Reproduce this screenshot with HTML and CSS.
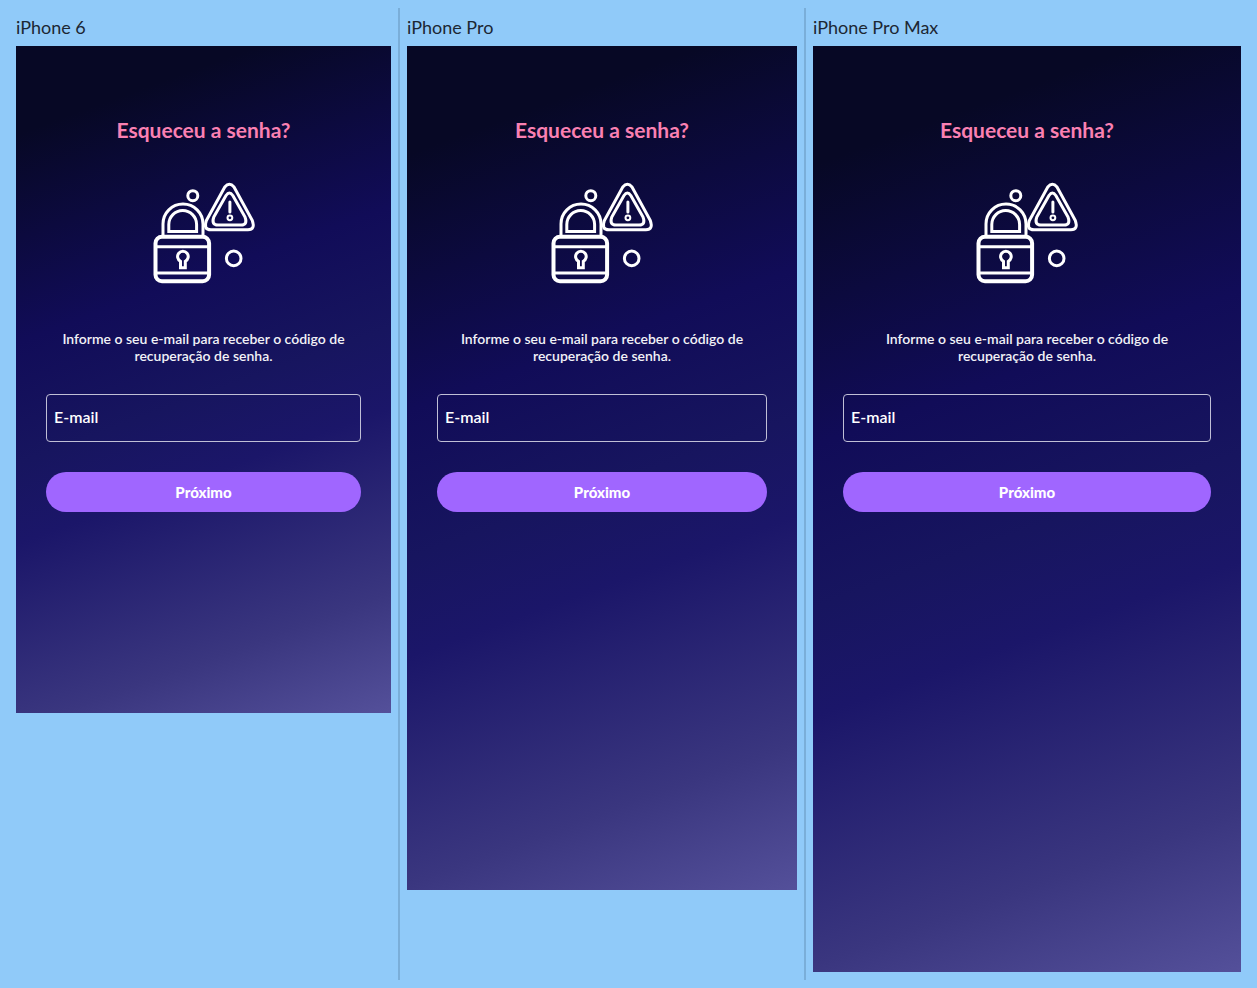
FILE: index.html
```html
<!DOCTYPE html>
<html lang="pt-BR">
<head>
  <meta charset="utf-8">
  <meta name="viewport" content="width=device-width, initial-scale=1">
  <title>Esqueceu a senha?</title>
  <link rel="stylesheet" href="styles.css">
</head>
<body>
  <svg class="sprite" aria-hidden="true">
    <symbol id="lock-alert" viewBox="152 181 104 104">
      <g fill="none" stroke="#fff" stroke-width="3" stroke-linecap="round" stroke-linejoin="round">
        <circle cx="192.8" cy="195.7" r="5"/>
        <circle cx="233.7" cy="258.4" r="7.3"/>
        <path d="M163 236V224A20 20 0 0 1 203 224V236"/>
        <path stroke-linejoin="miter" d="M168.8 231.5V224.4A13.9 13.9 0 0 1 196.6 224.4V231.5Z"/>
        <rect x="155.5" y="236.7" width="53.6" height="44.5" rx="6.5" stroke-width="4"/>
        <path stroke-width="3" d="M156 246.8H208M156 273H208"/>
        <path stroke-linejoin="miter" d="M180.5 267.8V261.3A5.3 5.3 0 1 1 185.3 261.3V267.8Z"/>
        <path d="M224.8 187Q229.4 181.4 234 187L252.3 220.5Q255.5 229.8 248 229.8H211Q203 229.8 206.4 220.5Z"/>
        <path stroke-width="3" d="M226 195.5Q229.4 190.6 232.8 195.5L245 217Q248 225 241 225H218Q211 225 213.8 217Z"/>
        <path stroke-width="3" d="M229.9 202V212"/>
        <circle cx="229.9" cy="217.8" r="2.4" stroke-width="2"/>
      </g>
    </symbol>
  </svg>
  <main class="board">
    <section class="device">
      <h2 class="device-name">iPhone 6</h2>
      <form class="screen screen-small">
        <h1 class="title">Esqueceu a senha?</h1>
        <svg class="picture" aria-hidden="true"><use href="#lock-alert"/></svg>
        <p class="hint">Informe o seu e-mail para receber o código de recuperação de senha.</p>
        <input class="field" type="email" placeholder="E-mail" aria-label="E-mail">
        <button class="next" type="button">Próximo</button>
      </form>
    </section>
    <div class="divider"></div>
    <section class="device">
      <h2 class="device-name">iPhone Pro</h2>
      <form class="screen screen-pro">
        <h1 class="title">Esqueceu a senha?</h1>
        <svg class="picture" aria-hidden="true"><use href="#lock-alert"/></svg>
        <p class="hint">Informe o seu e-mail para receber o código de recuperação de senha.</p>
        <input class="field" type="email" placeholder="E-mail" aria-label="E-mail">
        <button class="next" type="button">Próximo</button>
      </form>
    </section>
    <div class="divider"></div>
    <section class="device">
      <h2 class="device-name">iPhone Pro Max</h2>
      <form class="screen screen-max">
        <h1 class="title">Esqueceu a senha?</h1>
        <svg class="picture" aria-hidden="true"><use href="#lock-alert"/></svg>
        <p class="hint">Informe o seu e-mail para receber o código de recuperação de senha.</p>
        <input class="field" type="email" placeholder="E-mail" aria-label="E-mail">
        <button class="next" type="button">Próximo</button>
      </form>
    </section>
  </main>
</body>
</html>
```
FILE: styles.css
```css
* {
  box-sizing: border-box;
}

body {
  margin: 8px;
  background: #90caf9;
  font-family: Lato, "Liberation Sans", sans-serif;
}

.sprite {
  display: none;
}

.board {
  display: grid;
  grid-template-columns: 375fr 2px 390fr 2px 428fr;
  column-gap: 7px;
  padding: 0 8px;
}

.divider {
  background: #7aaed9;
}

.device {
  padding: 8px 0;
}

.device-name {
  margin: 0 0 8px;
  color: #1c2733;
  font-size: 18px;
  font-weight: 400;
  line-height: 22px;
}

.screen {
  display: flex;
  flex-direction: column;
  align-items: center;
  padding: 72px 30px 30px;
  background: linear-gradient(160deg, #070825 11%, #110c58 37%, #17155f 52%, #1b1669 62%, #3a367f 85%, #54509a 100%);
}

.screen-small {
  aspect-ratio: 375 / 667;
}

.screen-pro {
  aspect-ratio: 390 / 844;
}

.screen-max {
  aspect-ratio: 428 / 926;
}

.title {
  margin: 0;
  color: #fa80b2;
  font-size: 21px;
  font-weight: 700;
  line-height: 24px;
}

.picture {
  width: 104px;
  height: 104px;
  margin: 39px 0 45px;
}

.hint {
  max-width: 315px;
  margin: 0;
  color: #f2f2f7;
  font-size: 14px;
  font-weight: 600;
  line-height: 17px;
  text-align: center;
}

.field {
  width: 100%;
  height: 48px;
  margin: 30px 0;
  padding: 0 7px 3px;
  border: 1px solid #c0bfd6;
  border-radius: 4px;
  background: transparent;
  color: #fff;
  font: 600 16px Lato, "Liberation Sans", sans-serif;
}

.field::placeholder {
  color: #fff;
  opacity: 1;
}

.next {
  width: 100%;
  height: 40px;
  border: 0;
  border-radius: 20px;
  background: #a066ff;
  color: #fff;
  font: 900 15px Lato, "Liberation Sans", sans-serif;
}
```
